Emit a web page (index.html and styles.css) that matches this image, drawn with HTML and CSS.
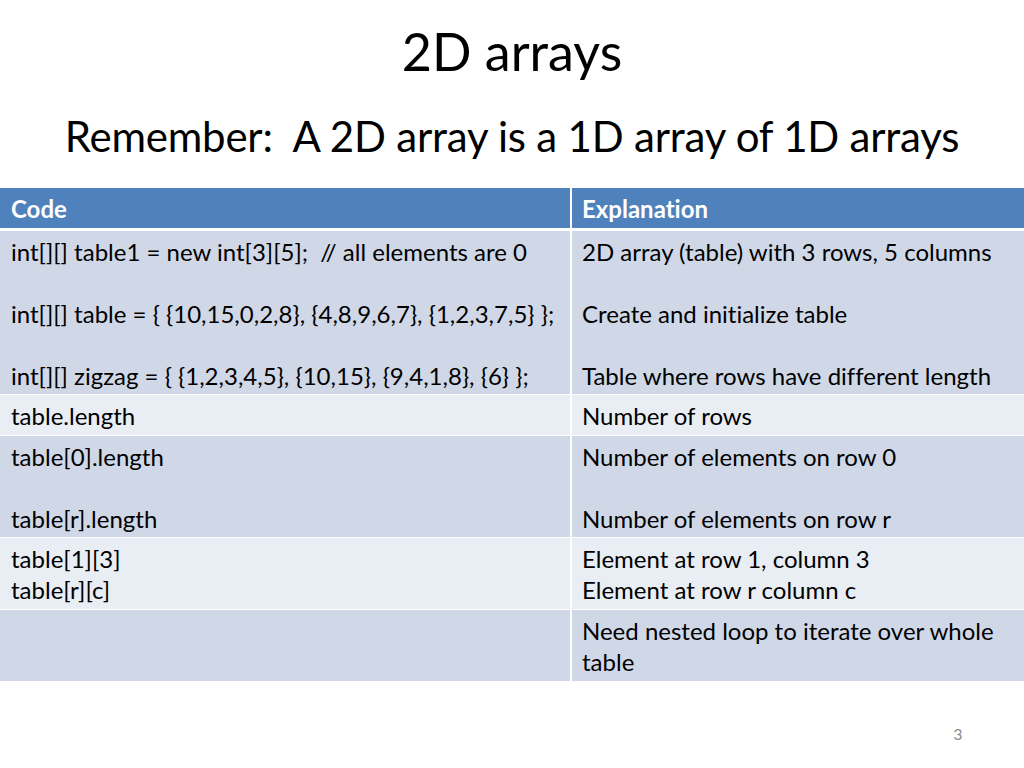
FILE: index.html
```html
<!DOCTYPE html>
<html lang="en">
<head>
<meta charset="utf-8">
<title>2D arrays</title>
<link rel="stylesheet" href="styles.css">
</head>
<body>
<div class="slide">
  <h1 class="title">2D arrays</h1>
  <h2 class="subtitle">Remember:&nbsp; A 2D array is a 1D array of 1D arrays</h2>
  <table class="grid">
    <thead>
      <tr><th class="c1">Code</th><th class="c2">Explanation</th></tr>
    </thead>
    <tbody>
      <tr class="odd">
        <td class="c1">int[][] table1 = new int[3][5];&nbsp; // all elements are 0<br><br>int[][] table = { {10,15,0,2,8}, {4,8,9,6,7}, {1,2,3,7,5} };<br><br>int[][] zigzag = { {1,2,3,4,5}, {10,15}, {9,4,1,8}, {6} };</td>
        <td class="c2">2D array (table) with 3 rows, 5 columns<br><br>Create and initialize table<br><br>Table where rows have different length</td>
      </tr>
      <tr class="even">
        <td class="c1">table.length</td>
        <td class="c2">Number of rows</td>
      </tr>
      <tr class="odd">
        <td class="c1">table[0].length<br><br>table[r].length</td>
        <td class="c2">Number of elements on row 0<br><br>Number of elements on row r</td>
      </tr>
      <tr class="even">
        <td class="c1">table[1][3]<br>table[r][c]</td>
        <td class="c2">Element at row 1, column 3<br>Element at row r column c</td>
      </tr>
      <tr class="odd">
        <td class="c1"></td>
        <td class="c2">Need nested loop to iterate over whole table</td>
      </tr>
    </tbody>
  </table>
  <div class="pagenum">3</div>
</div>
</body>
</html>
```

FILE: styles.css
```css
html, body {
  margin: 0;
  padding: 0;
  background: #ffffff;
}
.slide {
  width: 1024px;
  height: 768px;
  position: relative;
  font-family: Lato, "Open Sans", "Liberation Sans", sans-serif;
  font-variant-ligatures: none;
  font-feature-settings: "liga" 0, "clig" 0, "dlig" 0;
  color: #000000;
  overflow: hidden;
}
.title {
  margin: 0;
  padding-top: 15px;
  height: 72px;
  font-size: 52px;
  font-weight: 400;
  line-height: 72px;
  text-align: center;
}
.subtitle {
  margin: 0;
  padding-top: 10px;
  height: 78px;
  font-size: 42px;
  font-weight: 400;
  line-height: 78px;
  text-align: center;
  letter-spacing: -0.2px;
}
.grid {
  margin-top: 13px;
  width: 1024px;
  border-collapse: collapse;
  table-layout: fixed;
  font-size: 24px;
  line-height: 31px;
}
.grid th, .grid td {
  text-align: left;
  vertical-align: top;
  border: 1px solid #ffffff;
}
.grid .c1 {
  width: 571px;
  padding: 5px 10px 3.6px 11px;
  box-sizing: border-box;
}
.grid .c2 {
  padding: 5px 10px 3.6px 10px;
  border-left-width: 2px;
}
.grid th {
  background: #4f81bd;
  color: #ffffff;
  font-weight: 700;
  padding-top: 4px;
  padding-bottom: 3px;
  border-top: none;
  border-bottom: 3px solid #ffffff;
}
.grid tr > :first-child { border-left: none; }
.grid tr > :last-child { border-right: none; }
.grid .odd td { background: #d0d8e8; }
.grid .even td { background: #e9edf4; }
.pagenum {
  position: absolute;
  left: 940px;
  top: 724px;
  width: 36px;
  text-align: center;
  font-size: 16px;
  color: #8c8c8c;
}
```
